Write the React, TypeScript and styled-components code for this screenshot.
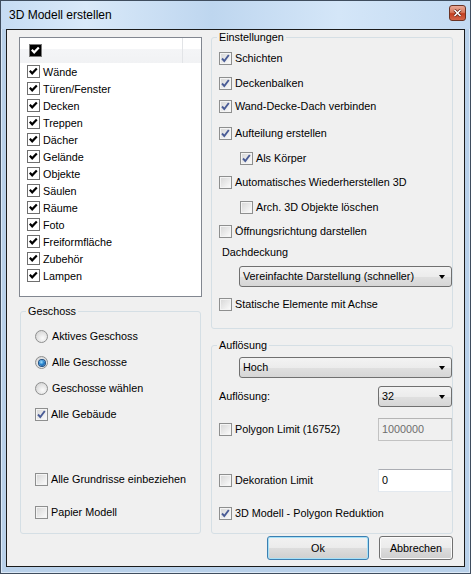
import React from 'react';
import styled, { createGlobalStyle } from 'styled-components';

const GlobalStyle = createGlobalStyle`
  html, body {
    margin: 0;
    padding: 0;
    background: #ffffff;
  }
  body {
    font-family: "Liberation Sans", Arial, sans-serif;
    font-size: 10.8px;
    color: #000;
  }
`;

const Window = styled.div`
  box-sizing: border-box;
  width: 471px;
  height: 574px;
  border: 1px solid #3f4d5e;
  background: #b9d1ea;
  box-shadow: inset 0 0 0 1px #dce9f7;
  display: flex;
  flex-direction: column;
`;

const TitleBar = styled.div`
  height: 28px;
  flex: none;
  display: flex;
  align-items: center;
  justify-content: space-between;
  padding: 0 4px 0 8px;
  background: linear-gradient(
    to right,
    #c6dcf3 0%,
    #d9e9f9 18%,
    #bed6ef 45%,
    #d4e6f8 72%,
    #c3daf2 100%
  );
`;

const Title = styled.span`
  font-size: 12px;
  color: #000;
  padding-bottom: 1px;
`;

const CloseButton = styled.div`
  box-sizing: border-box;
  width: 17px;
  height: 16px;
  align-self: flex-start;
  margin-top: 4px;
  border: 1px solid #6b3324;
  border-radius: 3px;
  background: linear-gradient(#eaa998 0%, #d77a5e 45%, #c33e1f 55%, #d4664a 100%);
  display: flex;
  align-items: center;
  justify-content: center;
`;

const Client = styled.div`
  box-sizing: border-box;
  flex: 1;
  margin: 0 5px 6px 5px;
  border: 1px solid #1b1b1b;
  background: #f0f0f0;
  display: grid;
  grid-template-columns: 183px 242px;
  column-gap: 9px;
  padding-left: 12px;
  align-items: start;
`;

const Column = styled.div<{ $top: number }>`
  display: flex;
  flex-direction: column;
  margin-top: ${(p) => p.$top}px;
`;

/* ---- list view ---- */

const ListBox = styled.div`
  box-sizing: border-box;
  height: 260px;
  border: 1px solid #828790;
  background: #fff;
`;

const ListHeader = styled.div`
  height: 25px;
  display: grid;
  grid-template-columns: 163px 1fr;
  background: linear-gradient(#ffffff 0%, #ffffff 45%, #f4f5f7 46%, #f1f2f4 100%);
`;

const HeaderCell = styled.div`
  display: flex;
  align-items: center;
  padding-left: 9px;
  border-right: 1px solid #e2e4e7;
`;

const ListItem = styled.div`
  height: 17px;
  display: flex;
  align-items: center;
  gap: 3px;
  padding-left: 7px;
`;

const ClassicBox = styled.span<{ $dark?: boolean }>`
  box-sizing: border-box;
  width: 13px;
  height: 13px;
  flex: none;
  border: 1px solid ${(p) => (p.$dark ? '#7a7a7a' : '#6f6f6f')};
  background: ${(p) => (p.$dark ? '#000' : '#fff')};
  display: flex;
  align-items: center;
  justify-content: center;
`;

/* ---- group boxes ---- */

const Group = styled.fieldset<{ $h: number; $mt?: number; $mx?: number }>`
  box-sizing: border-box;
  margin: ${(p) => p.$mt ?? 0}px ${(p) => p.$mx ?? 0}px 0;
  padding: 0;
  min-width: 0;
  height: ${(p) => p.$h}px;
  border: 1px solid #d5dfe5;
  border-radius: 3px;
  display: flex;
  flex-direction: column;
`;

const Legend = styled.legend`
  margin-left: 5px;
  padding: 0 2px;
  font-size: 10.8px;
  line-height: 13px;
`;

const Row = styled.div<{ $mt: number; $indent: number; $h?: number; $split?: boolean }>`
  display: flex;
  align-items: center;
  gap: 3px;
  height: ${(p) => p.$h ?? 13}px;
  margin-top: ${(p) => p.$mt}px;
  padding-left: ${(p) => p.$indent}px;
  justify-content: ${(p) => (p.$split ? 'space-between' : 'flex-start')};
  line-height: 13px;
  white-space: nowrap;
`;

const Label = styled.span<{ $grow?: boolean }>`
  flex: ${(p) => (p.$grow ? 1 : 'none')};
`;

const ThemedBox = styled.span`
  box-sizing: border-box;
  width: 13px;
  height: 13px;
  flex: none;
  border: 1px solid #8e8f8f;
  background: linear-gradient(135deg, #d6d6d6 0%, #e9e9e9 50%, #fdfdfd 100%);
  box-shadow: inset 0 0 0 1px #f4f4f4;
  display: flex;
  align-items: center;
  justify-content: center;
`;

const Radio = styled.span<{ $on?: boolean }>`
  box-sizing: border-box;
  width: 13px;
  height: 13px;
  flex: none;
  border-radius: 50%;
  border: 1px solid #8e8f8f;
  background: radial-gradient(circle at 60% 65%, #fbfbfb 0%, #e2e2e2 55%, #cbcbcb 100%);
  display: flex;
  align-items: center;
  justify-content: center;
  margin-right: 1px;

  &::after {
    content: '';
    display: ${(p) => (p.$on ? 'block' : 'none')};
    width: 6px;
    height: 6px;
    border-radius: 50%;
    background: radial-gradient(circle at 40% 35%, #a6e3ff 0%, #2a86d0 45%, #0b3f7d 100%);
    box-shadow: 0 0 0 1px #1e4f83;
  }
`;

const Combo = styled.div<{ $w: number }>`
  box-sizing: border-box;
  width: ${(p) => p.$w}px;
  height: 21px;
  flex: none;
  border: 1px solid #707070;
  border-radius: 3px;
  background: linear-gradient(#f3f3f3 0%, #ececec 50%, #e0e0e0 51%, #d6d6d6 100%);
  display: flex;
  align-items: center;
  padding: 0 6px 0 3px;
  line-height: 13px;
`;

const ComboText = styled.span`
  flex: 1;
`;

const Arrow = styled.span`
  width: 0;
  height: 0;
  border-left: 3.5px solid transparent;
  border-right: 3.5px solid transparent;
  border-top: 4px solid #000;
`;

const TextField = styled.div<{ $disabled?: boolean }>`
  box-sizing: border-box;
  width: 74px;
  height: 23px;
  flex: none;
  border: 1px solid ${(p) => (p.$disabled ? '#c2c2c2' : '#e3e9ef')};
  border-top-color: ${(p) => (p.$disabled ? '#b5b5b5' : '#abadb3')};
  background: ${(p) => (p.$disabled ? '#f0f0f0' : '#fff')};
  color: ${(p) => (p.$disabled ? '#6d6d6d' : '#000')};
  display: flex;
  align-items: center;
  padding-left: 3px;
`;

const Buttons = styled.div`
  display: flex;
  justify-content: flex-end;
  gap: 10px;
  margin-top: 2px;
`;

const Button = styled.div<{ $w: number; $default?: boolean }>`
  box-sizing: border-box;
  width: ${(p) => p.$w}px;
  height: 24px;
  border: 1px solid ${(p) => (p.$default ? '#3c7fb1' : '#707070')};
  border-radius: 3px;
  background: linear-gradient(#f2f2f2 0%, #ebebeb 50%, #dddddd 51%, #cfcfcf 100%);
  box-shadow: inset 0 0 0 1px ${(p) => (p.$default ? '#a6e0f7' : '#fbfbfb')};
  display: flex;
  align-items: center;
  justify-content: center;
`;

/* ---- small drawings ---- */

const ThemedCheck = () => (
  <svg width="11" height="11" viewBox="0 0 11 11">
    <polyline points="2,5.5 4.3,8 8.8,2" fill="none" stroke="#4a5c96" strokeWidth="1.9" />
  </svg>
);

const ClassicCheck = ({ color }: { color: string }) => (
  <svg width="11" height="11" viewBox="0 0 11 11">
    <polyline points="1.8,4.8 4.2,7.3 8.8,2.6" fill="none" stroke={color} strokeWidth="2.2" />
  </svg>
);

const CloseGlyph = () => (
  <svg width="9" height="8" viewBox="0 0 9 8">
    <path d="M1.5 1 L7.5 7 M7.5 1 L1.5 7" stroke="#5a1c10" strokeWidth="3" />
    <path d="M1.5 1 L7.5 7 M7.5 1 L1.5 7" stroke="#fff" strokeWidth="1.6" />
  </svg>
);

const Check = ({ on }: { on?: boolean }) => <ThemedBox>{on && <ThemedCheck />}</ThemedBox>;

const layers = [
  'Wände',
  'Türen/Fenster',
  'Decken',
  'Treppen',
  'Dächer',
  'Gelände',
  'Objekte',
  'Säulen',
  'Räume',
  'Foto',
  'Freiformfläche',
  'Zubehör',
  'Lampen',
];

export default function App() {
  return (
    <>
      <GlobalStyle />
      <Window>
        <TitleBar>
          <Title>3D Modell erstellen</Title>
          <CloseButton>
            <CloseGlyph />
          </CloseButton>
        </TitleBar>
        <Client>
          <Column $top={7}>
            <ListBox>
              <ListHeader>
                <HeaderCell>
                  <ClassicBox $dark>
                    <ClassicCheck color="#fff" />
                  </ClassicBox>
                </HeaderCell>
                <div />
              </ListHeader>
              {layers.map((name) => (
                <ListItem key={name}>
                  <ClassicBox>
                    <ClassicCheck color="#000" />
                  </ClassicBox>
                  <span>{name}</span>
                </ListItem>
              ))}
            </ListBox>

            <Group $h={229} $mt={8} $mx={1}>
              <Legend>Geschoss</Legend>
              <Row $mt={12} $indent={14}>
                <Radio />
                <Label>Aktives Geschoss</Label>
              </Row>
              <Row $mt={13} $indent={14}>
                <Radio $on />
                <Label>Alle Geschosse</Label>
              </Row>
              <Row $mt={13} $indent={14}>
                <Radio />
                <Label>Geschosse wählen</Label>
              </Row>
              <Row $mt={13} $indent={14}>
                <Check on />
                <Label>Alle Gebäude</Label>
              </Row>
              <Row $mt={52} $indent={14}>
                <Check />
                <Label>Alle Grundrisse einbeziehen</Label>
              </Row>
              <Row $mt={20} $indent={14}>
                <Check />
                <Label>Papier Modell</Label>
              </Row>
            </Group>
          </Column>

          <Column $top={1}>
            <Group $h={298}>
              <Legend>Einstellungen</Legend>
              <Row $mt={8} $indent={7}>
                <Check on />
                <Label>Schichten</Label>
              </Row>
              <Row $mt={12} $indent={7}>
                <Check on />
                <Label>Deckenbalken</Label>
              </Row>
              <Row $mt={10} $indent={7}>
                <Check on />
                <Label>Wand-Decke-Dach verbinden</Label>
              </Row>
              <Row $mt={14} $indent={7}>
                <Check on />
                <Label>Aufteilung erstellen</Label>
              </Row>
              <Row $mt={12} $indent={28}>
                <Check on />
                <Label>Als Körper</Label>
              </Row>
              <Row $mt={11} $indent={7}>
                <Check />
                <Label>Automatisches Wiederherstellen 3D</Label>
              </Row>
              <Row $mt={12} $indent={28}>
                <Check />
                <Label>Arch. 3D Objekte löschen</Label>
              </Row>
              <Row $mt={11} $indent={7}>
                <Check />
                <Label>Öffnungsrichtung darstellen</Label>
              </Row>
              <Row $mt={8} $indent={10}>
                <Label>Dachdeckung</Label>
              </Row>
              <Row $mt={7} $indent={27} $h={21}>
                <Combo $w={213}>
                  <ComboText>Vereinfachte Darstellung (schneller)</ComboText>
                  <Arrow />
                </Combo>
              </Row>
              <Row $mt={11} $indent={7}>
                <Check />
                <Label>Statische Elemente mit Achse</Label>
              </Row>
            </Group>

            <Group $h={195} $mt={10}>
              <Legend>Auflösung</Legend>
              <Row $mt={5} $indent={27} $h={21}>
                <Combo $w={213}>
                  <ComboText>Hoch</ComboText>
                  <Arrow />
                </Combo>
              </Row>
              <Row $mt={8} $indent={7} $h={21}>
                <Label $grow>Auflösung:</Label>
                <Combo $w={74}>
                  <ComboText>32</ComboText>
                  <Arrow />
                </Combo>
              </Row>
              <Row $mt={11} $indent={7} $h={23}>
                <Check />
                <Label $grow>Polygon Limit (16752)</Label>
                <TextField $disabled>1000000</TextField>
              </Row>
              <Row $mt={28} $indent={7} $h={23}>
                <Check />
                <Label $grow>Dekoration Limit</Label>
                <TextField>0</TextField>
              </Row>
              <Row $mt={15} $indent={7}>
                <Check on />
                <Label>3D Modell - Polygon Reduktion</Label>
              </Row>
            </Group>

            <Buttons>
              <Button $w={102} $default>
                Ok
              </Button>
              <Button $w={74}>Abbrechen</Button>
            </Buttons>
          </Column>
        </Client>
      </Window>
    </>
  );
}
